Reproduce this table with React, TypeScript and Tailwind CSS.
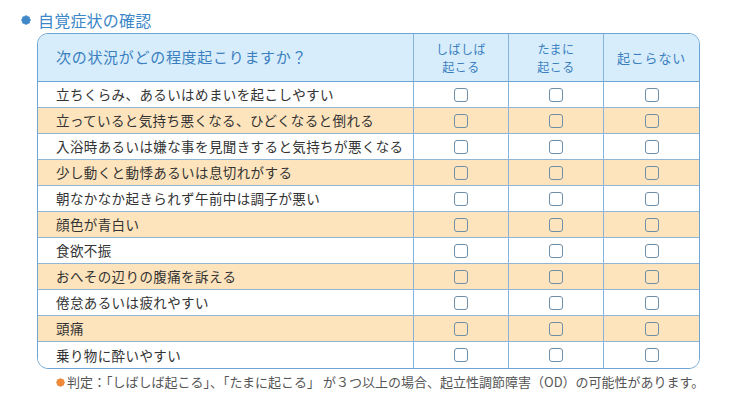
import React from "react";

const rows = [
  "立ちくらみ、あるいはめまいを起こしやすい",
  "立っていると気持ち悪くなる、ひどくなると倒れる",
  "入浴時あるいは嫌な事を見聞きすると気持ちが悪くなる",
  "少し動くと動悸あるいは息切れがする",
  "朝なかなか起きられず午前中は調子が悪い",
  "顔色が青白い",
  "食欲不振",
  "おへその辺りの腹痛を訴える",
  "倦怠あるいは疲れやすい",
  "頭痛",
  "乗り物に酔いやすい",
];

function Flower({ color, size }: { color: string; size: number }) {
  const petals = Array.from({ length: 8 }, (_, i) => {
    const a = (i * Math.PI) / 4;
    return <circle key={i} cx={5 + Math.cos(a) * 3.2} cy={5 + Math.sin(a) * 3.2} r={1.6} fill={color} />;
  });
  return (
    <svg width={size} height={size} viewBox="0 0 10 10">
      <circle cx={5} cy={5} r={3.6} fill={color} />
      {petals}
    </svg>
  );
}

function Box() {
  return <div className="w-[14px] h-[14px] rounded-[3px] border border-[#6f8ea8]" />;
}

function HeadCell({ lines, wide }: { lines: string[]; wide?: boolean }) {
  return (
    <div className="flex flex-col items-center justify-center border-l border-[#86b3d8]">
      {lines.map((l, i) => (
        <span
          key={i}
          className={
            wide
              ? "text-[13px] leading-[18px] tracking-[0.8px]"
              : "text-[12px] leading-[17.5px] tracking-[0.5px]"
          }
        >
          {l}
        </span>
      ))}
    </div>
  );
}

export default function App() {
  return (
    <div
      className="w-[731px] h-[402px] bg-white relative"
      style={{ fontFamily: '"Noto Sans CJK JP", "Noto Sans", sans-serif' }}
    >
      <div className="flex items-center pl-[21px] pt-[7px] h-[33px]">
        <Flower color="#3f88c8" size={10} />
        <span className="ml-[7px] text-[16px] leading-[22px] text-[#3c87c8] tracking-[0.2px]">自覚症状の確認</span>
      </div>
      <div className="ml-[37px] w-[663px] border-[1.5px] border-[#6ea5d3] rounded-[11px] overflow-hidden">
        <div className="grid grid-cols-[375px_95px_95px_1fr] h-[48px] bg-[#d7edfb] border-b-[1.5px] border-[#6ea5d3] text-[#3b7fbf]">
          <div className="flex items-center pl-[18px] text-[15px] tracking-[0.7px]">次の状況がどの程度起こりますか？</div>
          <HeadCell lines={["しばしば", "起こる"]} />
          <HeadCell lines={["たまに", "起こる"]} />
          <HeadCell lines={["起こらない"]} wide />
        </div>
        {rows.map((r, i) => (
          <div
            key={i}
            className={
              "grid grid-cols-[375px_95px_95px_1fr] h-[26px] " +
              (i % 2 === 1 ? "bg-[#fde4bd] " : "bg-white ") +
              (i < rows.length - 1 ? "border-b border-[#8fb6d6]" : "")
            }
          >
            <div className="flex items-center pl-[18px] text-[13.5px] text-[#333] tracking-[0.4px] whitespace-nowrap">{r}</div>
            <div className="flex items-center justify-center border-l border-[#86b3d8]"><Box /></div>
            <div className="flex items-center justify-center border-l border-[#86b3d8]"><Box /></div>
            <div className="flex items-center justify-center border-l border-[#86b3d8]"><Box /></div>
          </div>
        ))}
      </div>
      <div className="flex items-center pl-[56px] mt-[5px]">
        <Flower color="#f0893a" size={9} />
        <span className="ml-[2px] text-[13px] leading-[16px] text-[#555] whitespace-nowrap">判定：「しばしば起こる」、「たまに起こる」 が３つ以上の場合、起立性調節障害（OD）の可能性があります。</span>
      </div>
    </div>
  );
}
